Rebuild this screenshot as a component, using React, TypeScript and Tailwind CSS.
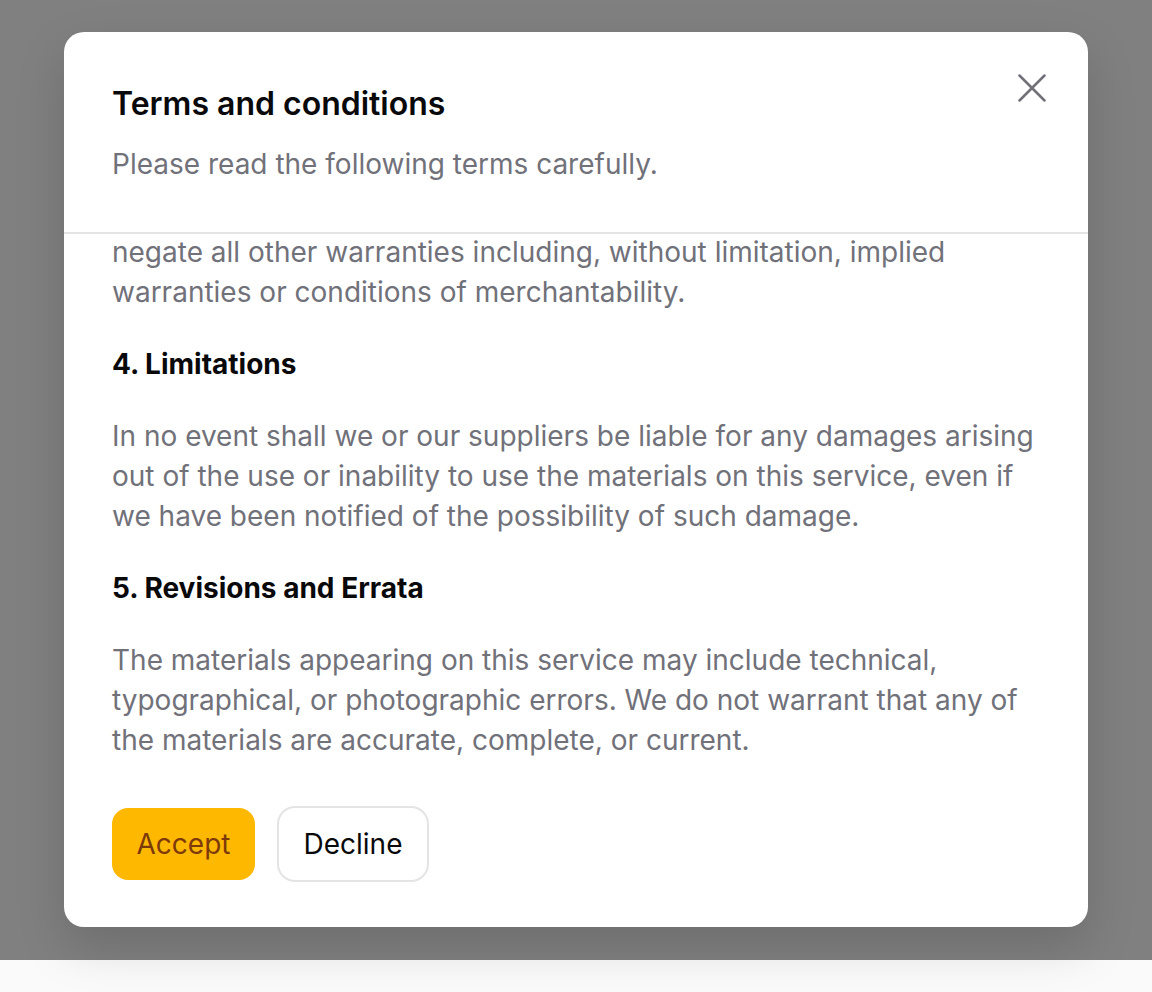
import React from 'react';

const body = 'text-[28px] leading-[40px] text-[#71717a]';
const heading = 'text-[28px] leading-[40px] font-bold text-[#09090b]';

export default function App() {
  return (
    <div
      className="min-h-screen bg-[#fafafa]"
      style={{ fontFamily: 'Inter, "Noto Sans", sans-serif' }}
    >
      <div className="h-[960px] bg-[#808080] px-[64px] pt-[32px]">
        <div className="relative h-[895px] overflow-hidden rounded-[20px] bg-white shadow-[0_20px_50px_rgba(0,0,0,0.15)] flex flex-col">
          <button
            className="absolute right-[42px] top-[42px] flex h-[28px] w-[28px] items-center justify-center text-[#71717a]"
            aria-label="Close"
          >
            <svg width="28" height="28" viewBox="0 0 28 28" fill="none">
              <path
                d="M1.5 1.5 26.5 26.5M26.5 1.5 1.5 26.5"
                stroke="currentColor"
                strokeWidth="2.5"
                strokeLinecap="round"
              />
            </svg>
          </button>

          {/* header */}
          <div className="relative z-10 border-b-2 border-[#e4e4e7] px-[48px] pt-[48px] pb-[48px]">
            <h2 className="text-[32px] leading-[48px] font-semibold text-[#09090b]">
              Terms and conditions
            </h2>
            <p className={`mt-[16px] ${body}`}>
              Please read the following terms carefully.
            </p>
          </div>

          {/* scrolled body */}
          <div className="-mt-[2px] flex flex-col gap-[32px] px-[48px]">
            <p className={body}>
              negate all other warranties including, without limitation, implied
              warranties or conditions of merchantability.
            </p>
            <h3 className={heading}>4. Limitations</h3>
            <p className={body}>
              In no event shall we or our suppliers be liable for any damages
              arising out of the use or inability to use the materials on this
              service, even if we have been notified of the possibility of such
              damage.
            </p>
            <h3 className={heading}>5. Revisions and Errata</h3>
            <p className={body}>
              The materials appearing on this service may include technical,
              typographical, or photographic errors. We do not warrant that any
              of the materials are accurate, complete, or current.
            </p>
          </div>

          {/* footer */}
          <div className="flex items-center gap-[22px] px-[48px] pt-[46px]">
            <button className="h-[72px] w-[143px] rounded-[16px] bg-[#ffb800] text-[28px] text-[#7c3a0a]">
              Accept
            </button>
            <button className="h-[76px] w-[152px] rounded-[18px] border-2 border-[#e4e4e7] bg-white text-[28px] text-[#09090b]">
              Decline
            </button>
          </div>
        </div>
      </div>
    </div>
  );
}
